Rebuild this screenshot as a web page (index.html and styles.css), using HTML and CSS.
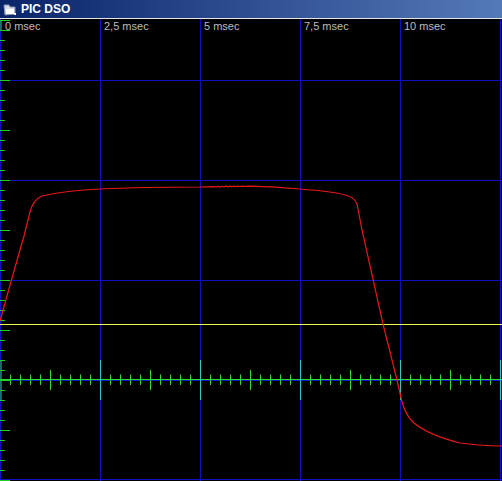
FILE: index.html
```html
<!DOCTYPE html>
<html lang="en">
<head>
    <meta charset="UTF-8">
    <title>PIC DSO</title>
    <link rel="stylesheet" href="styles.css">
</head>
<body>
    <div id="window">
    <div id="titlebar">
        <svg class="appicon" width="14" height="12" viewBox="0 0 14 12">
            <path d="M1 1 L6 1 L7 3 L12 3 L12 10 L2 11 Z" fill="#d8dce8" stroke="#8a94aa" stroke-width="1"/>
            <rect x="3" y="5" width="8" height="5" fill="#ffffff"/>
            <rect x="11" y="9" width="2" height="2" fill="#ffffff"/>
        </svg>
        <span class="title">PIC DSO</span>
    </div>
    <div id="scope">
        <svg width="502" height="462" viewBox="0 19 502 462">
            <rect x="0" y="19" width="502" height="462" fill="#000000"/>
            <g id="grid" stroke="#1010c4" stroke-width="1">
                <line x1="0.5" y1="19" x2="0.5" y2="481" stroke-width="1.5"/>
                <line x1="100.5" y1="19" x2="100.5" y2="481"/>
                <line x1="200.5" y1="19" x2="200.5" y2="481"/>
                <line x1="300.5" y1="19" x2="300.5" y2="481"/>
                <line x1="400.5" y1="19" x2="400.5" y2="481"/>
                <line x1="500.5" y1="19" x2="500.5" y2="481"/>
                <line x1="0" y1="80.5" x2="502" y2="80.5"/>
                <line x1="0" y1="180.5" x2="502" y2="180.5"/>
                <line x1="0" y1="280.5" x2="502" y2="280.5"/>
                <line x1="0" y1="380.5" x2="502" y2="380.5"/>
                <line x1="0" y1="479.5" x2="502" y2="479.5"/>
            </g>
            <line x1="0" y1="379.5" x2="502" y2="379.5" stroke="#30e030" stroke-width="1"/>
            <g id="yticks" stroke="#20d020" stroke-width="1"></g>
            <g id="xticks" stroke-width="1"></g>
            <g class="labels">
                <text x="5" y="30">0 msec</text>
                <text x="104" y="30">2,5 msec</text>
                <text x="204" y="30">5 msec</text>
                <text x="304" y="30">7,5 msec</text>
                <text x="404" y="30">10 msec</text>
            </g>
            <line x1="0" y1="324.5" x2="502" y2="324.5" stroke="#f4f450" stroke-width="1"/>
            <path id="trace" fill="none" stroke="#e81818" stroke-width="1.2"
                d="M0,321 L12,278 L24,236 L30,212 C32,204 35,199 42,196 C60,192 80,190 100,189 C130,187.5 160,187 200,187 L214,186.6 L216,187 L218,186.4 L220,187 L222,186.3 L224,186.9 L226,186.2 L228,186.8 L230,186.1 L232,186.7 L234,186.1 L236,186.6 L238,186.1 L240,186.5 L242,186.1 L244,186.4 L250,186.1 C270,186.5 290,188 300,189 C320,190.5 335,192 345,195 C352,197 355,199 357,204 L362,230 L383,324 L397,380 L402,402 C405,412 408,418 414,423 C425,432 440,438 460,443 C475,445 490,446 502,446"/>
        </svg>
    </div>
    </div>
    <script>
        // tick marks on the left and on the centre axis
        var ns = 'http://www.w3.org/2000/svg';
        function tick(group, x1, y1, x2, y2, colour){
            var l = document.createElementNS(ns, 'line');
            l.setAttribute('x1', x1); l.setAttribute('y1', y1);
            l.setAttribute('x2', x2); l.setAttribute('y2', y2);
            if(colour){ l.setAttribute('stroke', colour); }
            group.appendChild(l);
        }
        var yt = document.getElementById('yticks');
        for(var y = 20; y <= 480; y += 10){
            var len = ((y - 30) % 50 == 0 || y == 20) ? 10 : 5;
            tick(yt, 0, y + 0.5, len, y + 0.5);
        }
        tick(yt, 1, 20, 1, 30);
        tick(yt, 1, 360, 1, 400);
        var xt = document.getElementById('xticks');
        for(var x = 10; x <= 500; x += 10){
            if(x % 100 == 0){
                tick(xt, x + 0.5, 360, x + 0.5, 400, '#30c8c8');
            }else if(x % 50 == 0){
                tick(xt, x + 0.5, 370, x + 0.5, 390, '#30e030');
            }else{
                tick(xt, x + 0.5, 374.5, x + 0.5, 385, '#30e030');
            }
        }
    </script>
</body>
</html>
```
FILE: styles.css
```css
body
{
    margin: 0;
    background-color: #000000;
}
#window
{
    width: 502px;
    height: 481px;
    overflow: hidden;
}
#titlebar
{
    height: 19px;
    display: flex;
    align-items: center;
    gap: 4px;
    padding-left: 3px;
    background: linear-gradient(to right, #0a246a, #5479b8);
    border-bottom: 1px solid #e4e4e4;
    box-sizing: border-box;
}
.appicon
{
    display: block;
    margin-top: 1px;
}
.title
{
    color: #ffffff;
    font-family: 'Liberation Sans', Arial, sans-serif;
    font-weight: bold;
    font-size: 12px;
    line-height: 18px;
}
#scope svg
{
    display: block;
}
.labels text
{
    fill: #bcbcbc;
    font-family: 'Liberation Sans', Arial, sans-serif;
    font-size: 11px;
}
```
